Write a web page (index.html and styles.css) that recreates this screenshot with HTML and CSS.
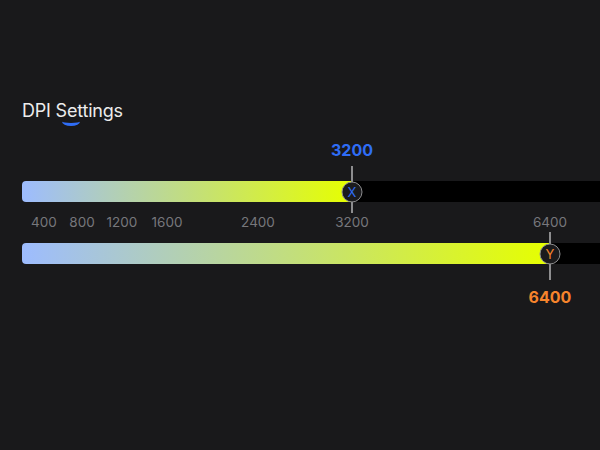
FILE: index.html
```html
<!DOCTYPE html>
<html>
    <head>
        <title>DPI Settings</title>
        <link rel="stylesheet" href="styles.css">
    </head>
    <body>
        <div class="dpiPanel">
            <div class="title">DPI Settings<span class="arc"></span></div>

            <div class="valueRow">
                <span class="value valueX" style="left:330px">3200</span>
            </div>
            <div class="track">
                <div class="fill" style="width:330px"></div>
                <span class="line lineX" style="left:330px"></span>
                <span class="knob knobX" style="left:330px">X</span>
            </div>

            <div class="scale">
                <span style="left:22px">400</span>
                <span style="left:60px">800</span>
                <span style="left:100px">1200</span>
                <span style="left:145px">1600</span>
                <span style="left:236px">2400</span>
                <span style="left:330px">3200</span>
                <span style="left:528px">6400</span>
            </div>

            <div class="track">
                <div class="fill" style="width:528px"></div>
                <span class="line lineY" style="left:528px"></span>
                <span class="knob knobY" style="left:528px">Y</span>
            </div>
            <div class="valueRow bottom">
                <span class="value valueY" style="left:528px">6400</span>
            </div>
        </div>
    </body>
</html>
```

FILE: styles.css
```css
html, body {
 margin: 0;
 background-color: #19191b;
 overflow: hidden;
}
.dpiPanel {
 padding: 100px 0 0 22px;
 font-family: Inter, "Noto Sans", sans-serif;
}
.title {
 position: relative;
 font-size: 18px;
 line-height: 22px;
 color: #ececec;
 letter-spacing: -0.2px;
}
.title .arc {
 position: absolute;
 left: 40px;
 top: 17px;
 width: 18px;
 height: 6px;
 border-bottom: 3px solid #2f6df6;
 border-radius: 0 0 50% 50%;
}

.valueRow {
 position: relative;
 height: 20px;
 margin-top: 18px;
}
.valueRow.bottom {margin-top: 23px;}
.value {
 position: absolute;
 top: 0;
 transform: translateX(-50%);
 font-size: 16px;
 font-weight: 700;
 line-height: 20px;
}
.valueX {color: #2f6df6;}
.valueY {color: #f6842c;}

.track {
 position: relative;
 height: 21px;
 margin-top: 21px;
 margin-right: -20px;
 background-color: #000;
 border-radius: 4px 0 0 4px;
}
.scale + .track {margin-top: 13px;}
.fill {
 height: 100%;
 border-radius: 4px 0 0 4px;
 background: linear-gradient(90deg, #9dbcff, #e6ff00);
}
.line {
 position: absolute;
 width: 2px;
 margin-left: -1px;
 background-color: #8d8d8f;
}
.lineX {top: -15px; bottom: -11px;}
.lineY {top: -11px; bottom: -16px;}
.knob {
 position: absolute;
 top: 50%;
 width: 21px;
 height: 21px;
 transform: translate(-50%, -50%);
 box-sizing: border-box;
 border: 1.5px solid #8d8d8f;
 border-radius: 50%;
 background-color: #1b1b1d;
 font-size: 13px;
 line-height: 18px;
 text-align: center;
}
.knobX {color: #2f6df6;}
.knobY {color: #f6842c;}

.scale {
 position: relative;
 height: 16px;
 margin-top: 12px;
}
.scale span {
 position: absolute;
 top: 0;
 transform: translateX(-50%);
 font-size: 13.5px;
 line-height: 16px;
 color: #77777b;
}
```
